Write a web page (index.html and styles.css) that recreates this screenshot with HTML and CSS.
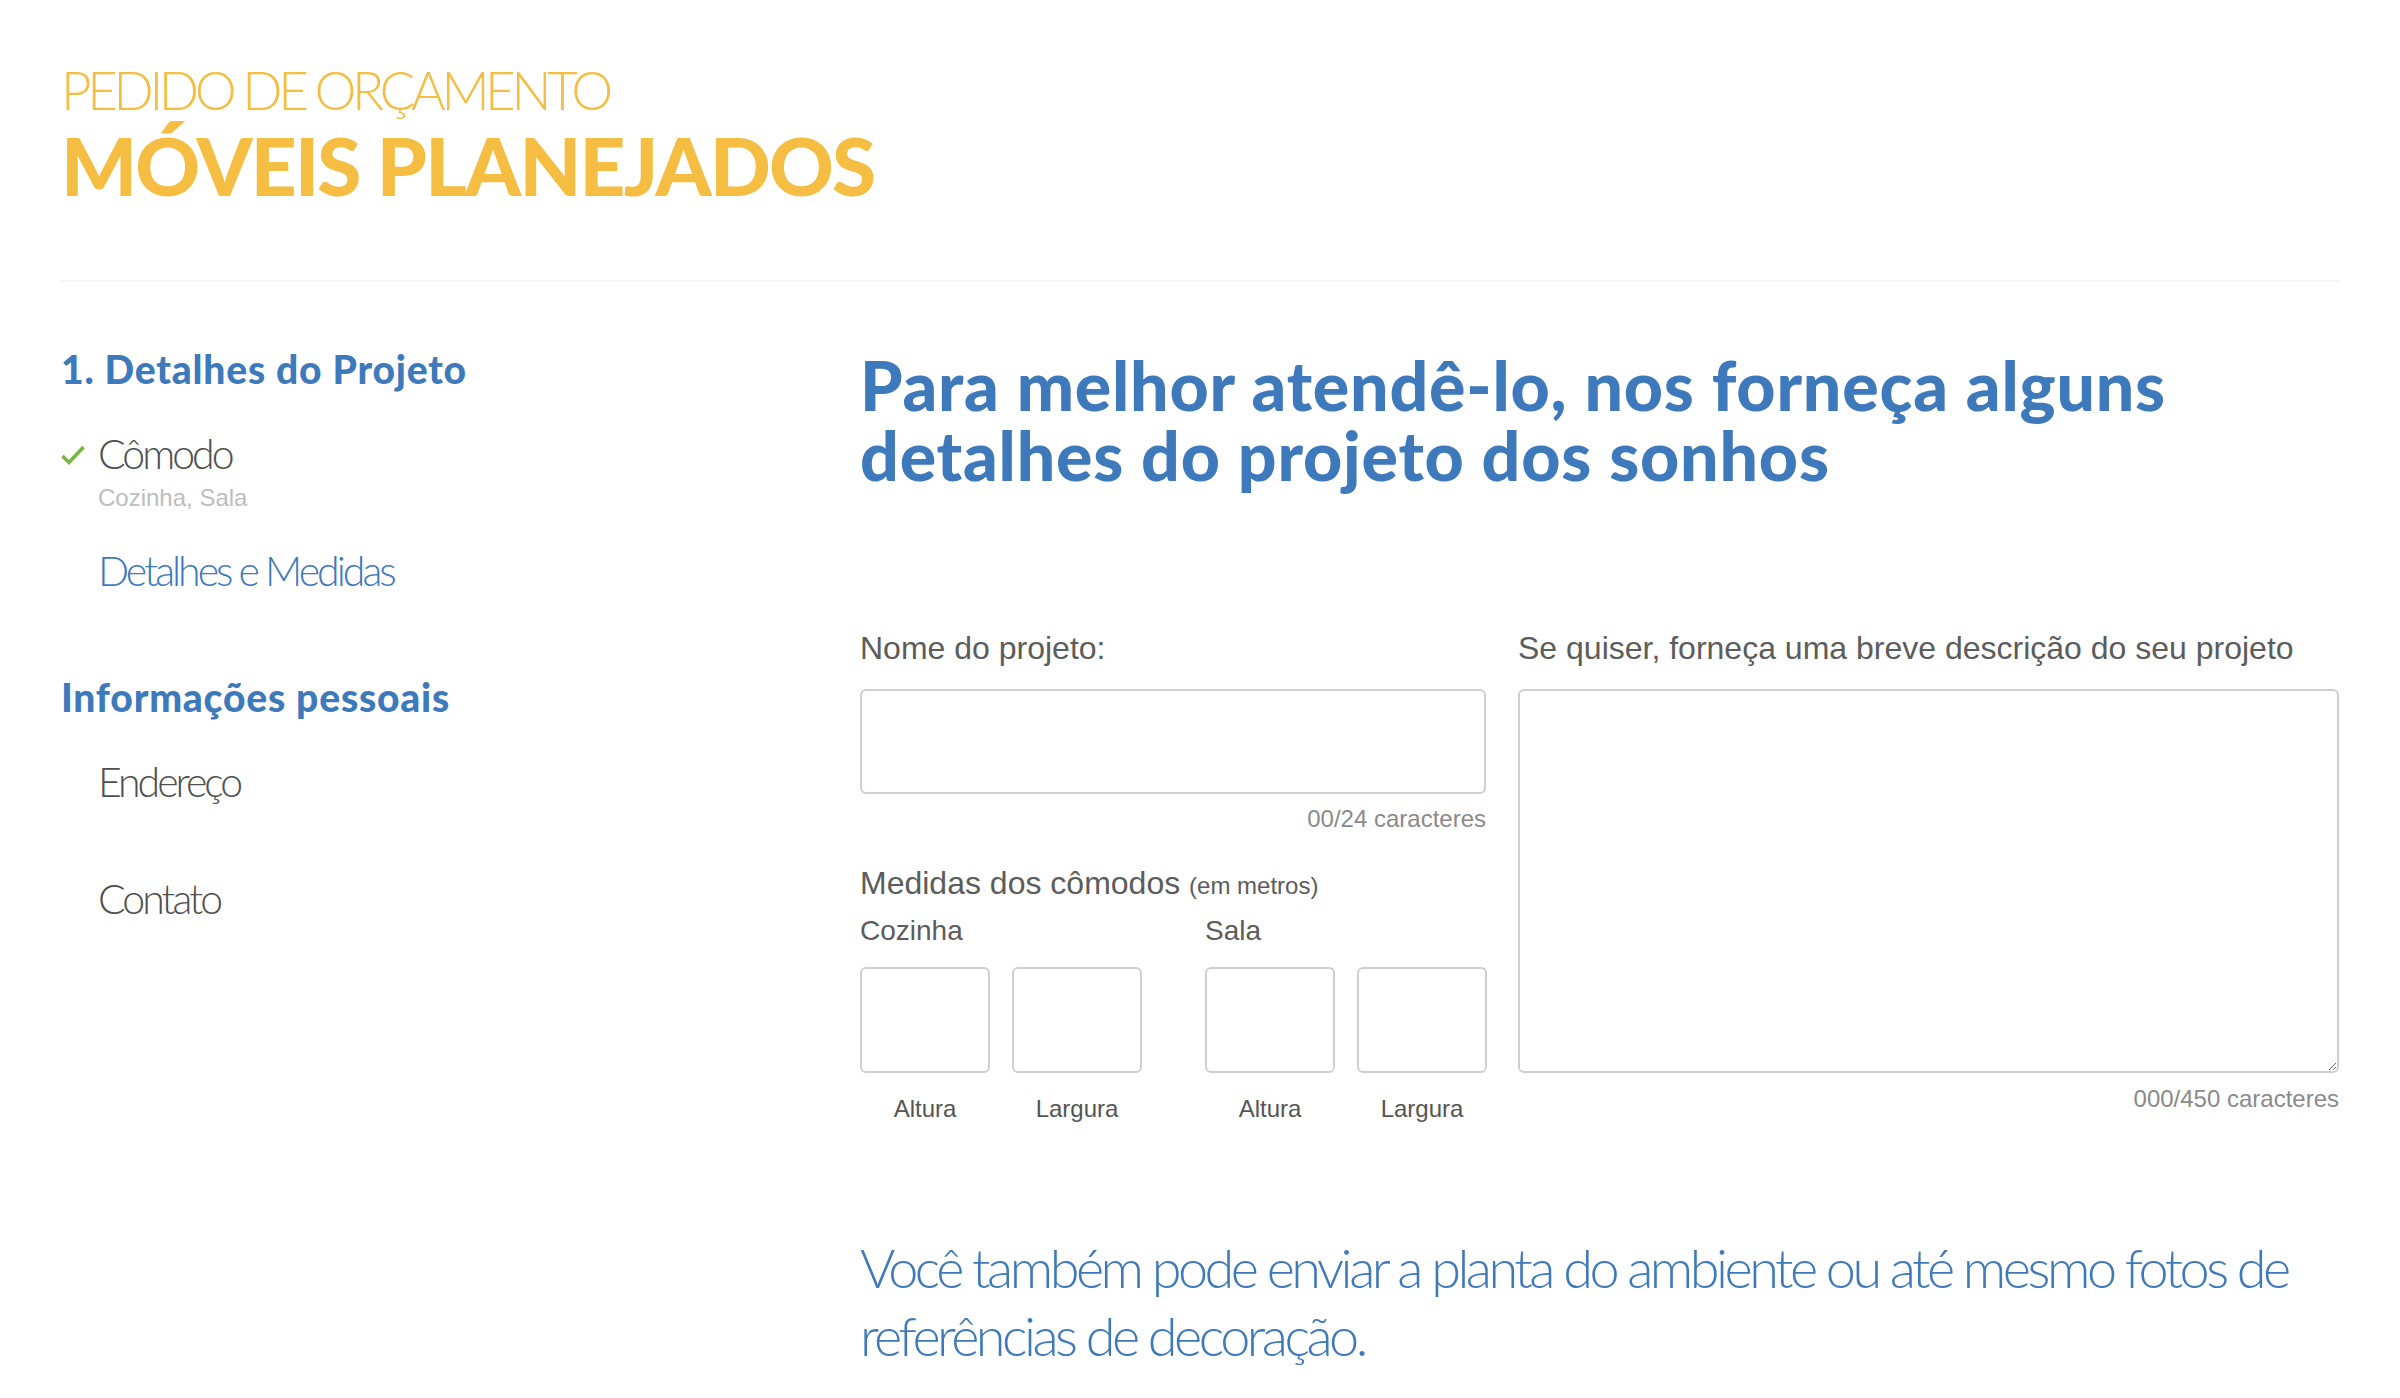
FILE: index.html
```html
<!DOCTYPE html>
<html lang="pt-BR">
<head>
<meta charset="utf-8">
<title>Pedido de Orçamento - Móveis Planejados</title>
<link rel="stylesheet" href="styles.css">
</head>
<body>
<div class="page">
  <header class="header">
    <div class="kicker">PEDIDO DE ORÇAMENTO</div>
    <h1 class="title">MÓVEIS PLANEJADOS</h1>
  </header>
  <div class="divider"></div>
  <div class="layout">
    <aside class="sidebar">
      <section class="step">
        <h2 class="step-title">1. Detalhes do Projeto</h2>
        <div class="item done">
          <div class="item-row">
            <svg class="check" width="24" height="22" viewBox="0 0 24 22"><path d="M1.5 12 L8 18.5 L22.5 3" fill="none" stroke="#78b444" stroke-width="3.6" stroke-linecap="butt" stroke-linejoin="miter"/></svg>
            <span class="item-label">Cômodo</span>
          </div>
          <div class="item-sub">Cozinha, Sala</div>
        </div>
        <div class="item active">
          <div class="item-row"><span class="item-label">Detalhes e Medidas</span></div>
        </div>
      </section>
      <section class="step">
        <h2 class="step-title">Informações pessoais</h2>
        <div class="item">
          <div class="item-row"><span class="item-label">Endereço</span></div>
        </div>
        <div class="item">
          <div class="item-row"><span class="item-label">Contato</span></div>
        </div>
      </section>
    </aside>
    <main class="content">
      <h2 class="lead">Para melhor atendê-lo, nos forneça alguns detalhes do projeto dos sonhos</h2>
      <div class="form-row">
        <div class="col-left">
          <label class="label" for="nome">Nome do projeto:</label>
          <input class="input" id="nome" type="text">
          <div class="counter">00/24 caracteres</div>
          <div class="label measures">Medidas dos cômodos <small>(em metros)</small></div>
          <div class="rooms">
            <div class="room">
              <div class="room-name">Cozinha</div>
              <div class="dims">
                <div class="dim"><input class="box" type="text"><span class="dim-label">Altura</span></div>
                <div class="dim"><input class="box" type="text"><span class="dim-label">Largura</span></div>
              </div>
            </div>
            <div class="room">
              <div class="room-name">Sala</div>
              <div class="dims">
                <div class="dim"><input class="box" type="text"><span class="dim-label">Altura</span></div>
                <div class="dim"><input class="box" type="text"><span class="dim-label">Largura</span></div>
              </div>
            </div>
          </div>
        </div>
        <div class="col-right">
          <label class="label" for="desc">Se quiser, forneça uma breve descrição do seu projeto</label>
          <textarea class="textarea" id="desc"></textarea>
          <div class="counter counter-right">000/450 caracteres</div>
        </div>
      </div>
      <p class="note">Você também pode enviar a planta do ambiente ou até mesmo fotos de referências de decoração.</p>
    </main>
  </div>
</div>
</body>
</html>
```
FILE: styles.css
```css
* { box-sizing: border-box; }
html, body { margin: 0; padding: 0; background: #fff; }
body { font-family: "Lato", "Liberation Sans", sans-serif; color: #555; }

.page { padding: 0 61px; }

.header { padding-top: 61px; }
.kicker {
  font-family: "Lato", sans-serif;
  font-weight: 300;
  font-size: 53px;
  line-height: 57px;
  color: #f5bd41;
  letter-spacing: -4.4px;
}
.title {
  margin: 7px 0 0;
  font-family: "Lato", sans-serif;
  font-weight: 900;
  font-size: 80px;
  line-height: 80px;
  color: #f5bd41;
  letter-spacing: -1.8px;
}
.divider { margin-top: 75px; height: 2px; background: #f3f3f3; }

.layout { display: flex; padding-top: 68px; }
.sidebar { width: 799px; flex: none; }
.content { flex: 1; min-width: 0; }

.step { margin-bottom: 49px; }
.step-title {
  margin: 0 0 45px;
  font-family: "Lato", sans-serif;
  font-weight: 900;
  font-size: 39px;
  line-height: 38px;
  color: #3e79bc;
  letter-spacing: 0.8px;
}
.item { min-height: 79px; margin-bottom: 38px; padding-left: 37px; }
.item-row { position: relative; }
.check { position: absolute; left: -37px; top: 11px; }
.item-label {
  font-family: "Lato", sans-serif;
  font-weight: 300;
  font-size: 41px;
  line-height: 42px;
  color: #4f4f4f;
  letter-spacing: -3px;
  display: block;
}
.item.active .item-label { color: #3e79bc; }
.item-sub {
  margin-top: 9px;
  font-family: "Liberation Sans", Arial, sans-serif;
  font-size: 24px;
  line-height: 28px;
  color: #bdbdbd;
}

.lead {
  margin: 0;
  font-family: "Lato", sans-serif;
  font-weight: 900;
  font-size: 68px;
  line-height: 70px;
  color: #3e79bc;
  letter-spacing: 0.8px;
  max-width: 1400px;
}

.form-row { display: flex; gap: 32px; margin-top: 138px; }
.col-left { width: 626px; flex: none; }
.col-right { flex: 1; display: flex; flex-direction: column; }

.label {
  display: block;
  font-family: "Liberation Sans", Arial, sans-serif;
  font-size: 32px;
  line-height: 40px;
  color: #5c5c5c;
}
.label small { font-size: 24px; }

.input, .box, .textarea {
  display: block;
  border: 2px solid #cfcfcf;
  border-radius: 6px;
  background: #fff;
  margin: 0;
  padding: 0;
  outline: none;
}
.input { width: 626px; height: 105px; margin-top: 21px; }
.textarea { width: 100%; height: 384px; margin-top: 21px; resize: vertical; }

.counter {
  margin-top: 10px;
  text-align: right;
  font-family: "Liberation Sans", Arial, sans-serif;
  font-size: 24px;
  line-height: 30px;
  color: #8a8a8a;
}
.counter-right { margin-top: 11px; }

.measures { margin-top: 29px; }
.rooms { display: flex; gap: 63px; margin-top: 8px; }
.room-name {
  font-family: "Liberation Sans", Arial, sans-serif;
  font-size: 28px;
  line-height: 34px;
  color: #5c5c5c;
}
.dims { display: flex; gap: 22px; margin-top: 19px; }
.dim { width: 130px; display: flex; flex-direction: column; align-items: center; }
.box { width: 130px; height: 106px; }
.dim-label {
  margin-top: 21px;
  font-family: "Liberation Sans", Arial, sans-serif;
  font-size: 24px;
  line-height: 30px;
  color: #555;
}

.note {
  margin: 110px 0 0;
  font-family: "Lato", sans-serif;
  font-weight: 300;
  font-size: 54px;
  line-height: 68px;
  color: #3e79bc;
  letter-spacing: -3.5px;
}
```
